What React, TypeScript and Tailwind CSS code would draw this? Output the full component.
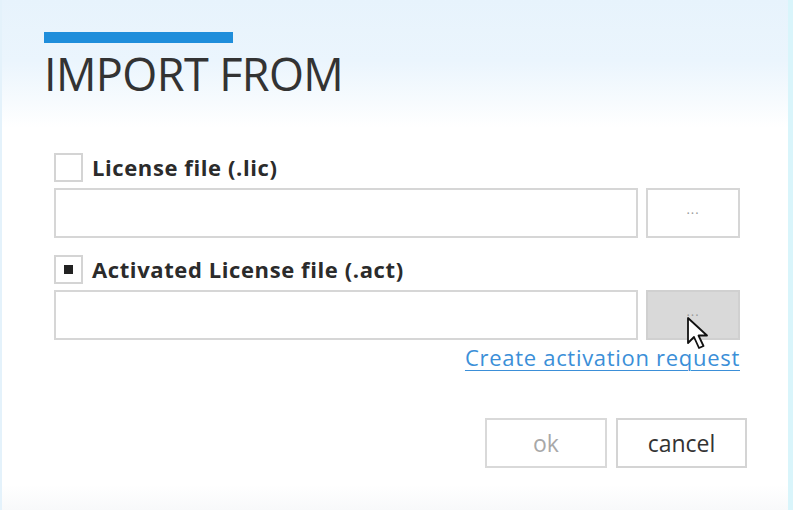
import React from 'react';

const font = { fontFamily: '"Open Sans", "Noto Sans", sans-serif' };

const Checkbox: React.FC<{ checked?: boolean; label: string }> = ({ checked, label }) => (
  <div className="flex items-center h-[29px]">
    <div className="w-[29px] h-[29px] border-2 border-[#d4d4d4] bg-white flex items-center justify-center">
      {checked && <div className="w-[9px] h-[9px] bg-[#222]" />}
    </div>
    <span className="ml-[9px] text-[22px] leading-[29px] font-bold text-[#2b2b2b] tracking-[0.6px]">{label}</span>
  </div>
);

const FileRow: React.FC<{ pressed?: boolean }> = ({ pressed }) => (
  <div className="flex mt-[6px] gap-[8px]">
    <div className="w-[584px] h-[50px] border-2 border-[#d6d6d6] bg-white" />
    <div
      className={
        'w-[94px] h-[50px] border-2 flex items-center justify-center text-[13px] text-[#9a9a9a] ' +
        (pressed ? 'bg-[#d9d9d9] border-[#d0d0d0]' : 'bg-white border-[#d6d6d6]')
      }
    >
      <span className="-mt-[6px] tracking-[1px]">...</span>
    </div>
  </div>
);

export default function App() {
  return (
    <div
      className="relative w-[793px] h-[510px] overflow-hidden border-l-2 border-r-[5px] border-l-[#e4f2fb] border-r-[#d9f5fb] bg-[linear-gradient(to_bottom,#e7f3fc_0%,#ebf5fd_12%,#f7fbfe_20%,#ffffff_25%,#ffffff_95%,#f8f9fa_100%)]"
      style={font}
    >
      <div className="pl-[42px] pt-[32px]">
        <div className="w-[189px] h-[11px] bg-[#1f8edb]" />
        <h1 className="mt-[8px] text-[45px] leading-[45px] font-normal text-[#333] tracking-[-0.6px]">IMPORT FROM</h1>
      </div>

      <div className="ml-[52px] mt-[57px] w-[686px]">
        <Checkbox label="License file (.lic)" />
        <FileRow />

        <div className="mt-[17px]">
          <Checkbox checked label="Activated License file (.act)" />
        </div>
        <FileRow pressed />

        <div className="flex justify-end mt-[2px]">
          <a className="text-[22px] leading-[30px] text-[#3b8fd8] underline underline-offset-[4px] decoration-1 tracking-[0.7px]" href="#">
            Create activation request
          </a>
        </div>
      </div>

      <div className="flex justify-end gap-[9px] pr-[41px] mt-[46px]">
        <button className="w-[122px] h-[50px] border-2 border-[#d9d9d9] bg-white text-[23px] text-[#a8a8a8]">ok</button>
        <button className="w-[131px] h-[50px] border-2 border-[#d4d4d4] bg-white text-[23px] text-[#333]">cancel</button>
      </div>

      <svg className="absolute left-[684px] top-[316px]" width="28" height="36" viewBox="0 0 28 36">
        <path
          d="M2 2 L2 27 L8 21 L13 32 L17.5 30 L12.5 19.5 L21 19.5 Z"
          fill="#fff"
          stroke="#111"
          strokeWidth="1.8"
          strokeLinejoin="round"
        />
      </svg>
    </div>
  );
}
